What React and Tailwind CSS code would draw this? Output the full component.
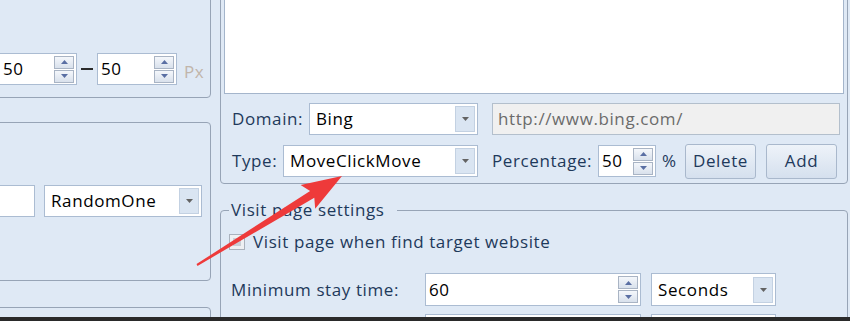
function Tri({ up, color = '#5a6fa3' }) {
  return (
    <svg width="7" height="4" viewBox="0 0 7 4">
      <path d={up ? 'M0 4L3.5 0L7 4Z' : 'M0 0L3.5 4L7 0Z'} fill={color} />
    </svg>
  )
}

function SpinBox({ value, className }) {
  return (
    <div className={`flex h-[32px] shrink-0 items-center justify-between border border-[#abbcd2] bg-white pl-[3px] pr-[2px] ${className}`}>
      <span className="text-black">{value}</span>
      <div className="flex flex-col gap-[1px]">
        <div className="flex h-[13px] w-[20px] items-center justify-center border border-[#a9b4c4] bg-gradient-to-b from-[#f4f7fb] to-[#d9e1ec]">
          <Tri up />
        </div>
        <div className="flex h-[13px] w-[20px] items-center justify-center border border-[#a9b4c4] bg-gradient-to-b from-[#f4f7fb] to-[#d9e1ec]">
          <Tri />
        </div>
      </div>
    </div>
  )
}

function Combo({ value, className }) {
  return (
    <div className={`flex h-[32px] shrink-0 items-center border border-[#abbcd2] bg-white pl-[6px] pr-[2px] ${className}`}>
      <span className="flex-1 text-black">{value}</span>
      <div className="flex h-[26px] w-[20px] items-center justify-center border border-[#c3d1e2] bg-[#dae5f2]">
        <Tri color="#636363" />
      </div>
    </div>
  )
}

function RedArrow() {
  return (
    <svg className="pointer-events-none absolute inset-0" width="850" height="321">
      <polygon
        points="196.5,264.1 310.1,190.9 300.6,185 342,176 315.2,208.8 314.3,197.7 197.5,265.9"
        fill="#ee3a3a"
      />
    </svg>
  )
}

export default function App() {
  return (
    <div className="relative h-[321px] w-[850px] overflow-hidden bg-[#dfe9f5] font-['Open_Sans','Noto_Sans',sans-serif] text-[17px] tracking-[0.6px] text-[#1e395b]">
      <div className="flex h-[317px] overflow-hidden">
        {/* Left column, cut off at the left edge */}
        <div className="-ml-[12px] flex w-[223px] shrink-0 flex-col">
          <div className="-mt-[10px] h-[108px] shrink-0 rounded-[4px] border border-[#97a4b6] pl-[10px] pt-[62px]">
            <div className="flex items-center">
              <SpinBox value="50" className="w-[78px]" />
              <div className="mx-[4px] h-[2px] w-[12px] bg-[#2b2b2b]" />
              <SpinBox value="50" className="w-[80px]" />
              <span className="ml-[7px] mt-[6px] text-[#c1b5aa]">Px</span>
            </div>
          </div>

          <div className="mt-[24px] h-[159px] shrink-0 rounded-[4px] border border-[#97a4b6] pt-[62px]">
            <div className="flex items-center">
              <div className="h-[32px] w-[46px] shrink-0 border border-[#abbcd2] bg-white" />
              <Combo value="RandomOne" className="ml-[9px] w-[158px]" />
            </div>
          </div>

          <div className="mt-[26px] h-[60px] shrink-0 rounded-[4px] border border-[#97a4b6]" />
        </div>

        {/* Right column */}
        <div className="ml-[9px] flex w-[628px] shrink-0 flex-col">
          <div className="-mt-[10px] h-[194px] shrink-0 rounded-[4px] border border-[#97a4b6] px-[3px]">
            <div className="h-[103px] border border-[#a4b5cb] bg-white" />

            <div className="mt-[9px] flex h-[32px] items-center pl-[8px]">
              <span className="w-[77px] shrink-0">Domain:</span>
              <Combo value="Bing" className="w-[169px]" />
              <div className="ml-[14px] flex h-[32px] w-[348px] items-center border border-[#b3bfcc] bg-[#f0f0f0] pl-[5px] text-[#6b6b6b]">
                http://www.bing.com/
              </div>
            </div>

            <div className="mt-[10px] flex h-[32px] items-center pl-[8px]">
              <span className="w-[51px] shrink-0">Type:</span>
              <Combo value="MoveClickMove" className="w-[195px]" />
              <span className="ml-[14px] w-[106px] shrink-0">Percentage:</span>
              <SpinBox value="50" className="w-[58px]" />
              <span className="ml-[6px] w-[23px] shrink-0">%</span>
              <button className="h-[35px] w-[71px] shrink-0 rounded-[3px] border border-[#a9b8cc] bg-gradient-to-b from-[#eef3f9] to-[#d5e0ee] text-[#1e395b]">
                Delete
              </button>
              <button className="ml-[10px] h-[35px] w-[71px] shrink-0 rounded-[3px] border border-[#a9b8cc] bg-gradient-to-b from-[#eef3f9] to-[#d5e0ee] text-[#1e395b]">
                Add
              </button>
            </div>
          </div>

          <fieldset className="mt-[15px] h-[140px] shrink-0 rounded-[4px] border border-[#97a4b6] pl-[8px]">
            <legend className="pl-[2px] pr-[12px] leading-[22px]">Visit page settings</legend>

            <label className="mt-[10px] flex h-[22px] items-center">
              <span className="flex h-[16px] w-[16px] items-center justify-center border border-[#aab2bd] bg-[#eef0f3]">
                <span className="h-[8px] w-[8px] bg-[#c9ced6]" />
              </span>
              <span className="ml-[8px]">Visit page when find target website</span>
            </label>

            <div className="mt-[20px] flex h-[33px] items-center pl-[2px]">
              <span className="w-[194px] shrink-0">Minimum stay time:</span>
              <SpinBox value="60" className="h-[33px] w-[216px]" />
              <Combo value="Seconds" className="ml-[10px] h-[33px] w-[125px]" />
            </div>

            <div className="mt-[8px] flex h-[33px] items-center pl-[196px]">
              <div className="h-[33px] w-[216px] shrink-0 border border-[#abbcd2] bg-white" />
              <div className="ml-[10px] h-[33px] w-[125px] shrink-0 border border-[#abbcd2] bg-white" />
            </div>
          </fieldset>
        </div>
      </div>

      <div className="h-[4px] bg-[#2a2a2a]" />

      <RedArrow />
    </div>
  )
}
